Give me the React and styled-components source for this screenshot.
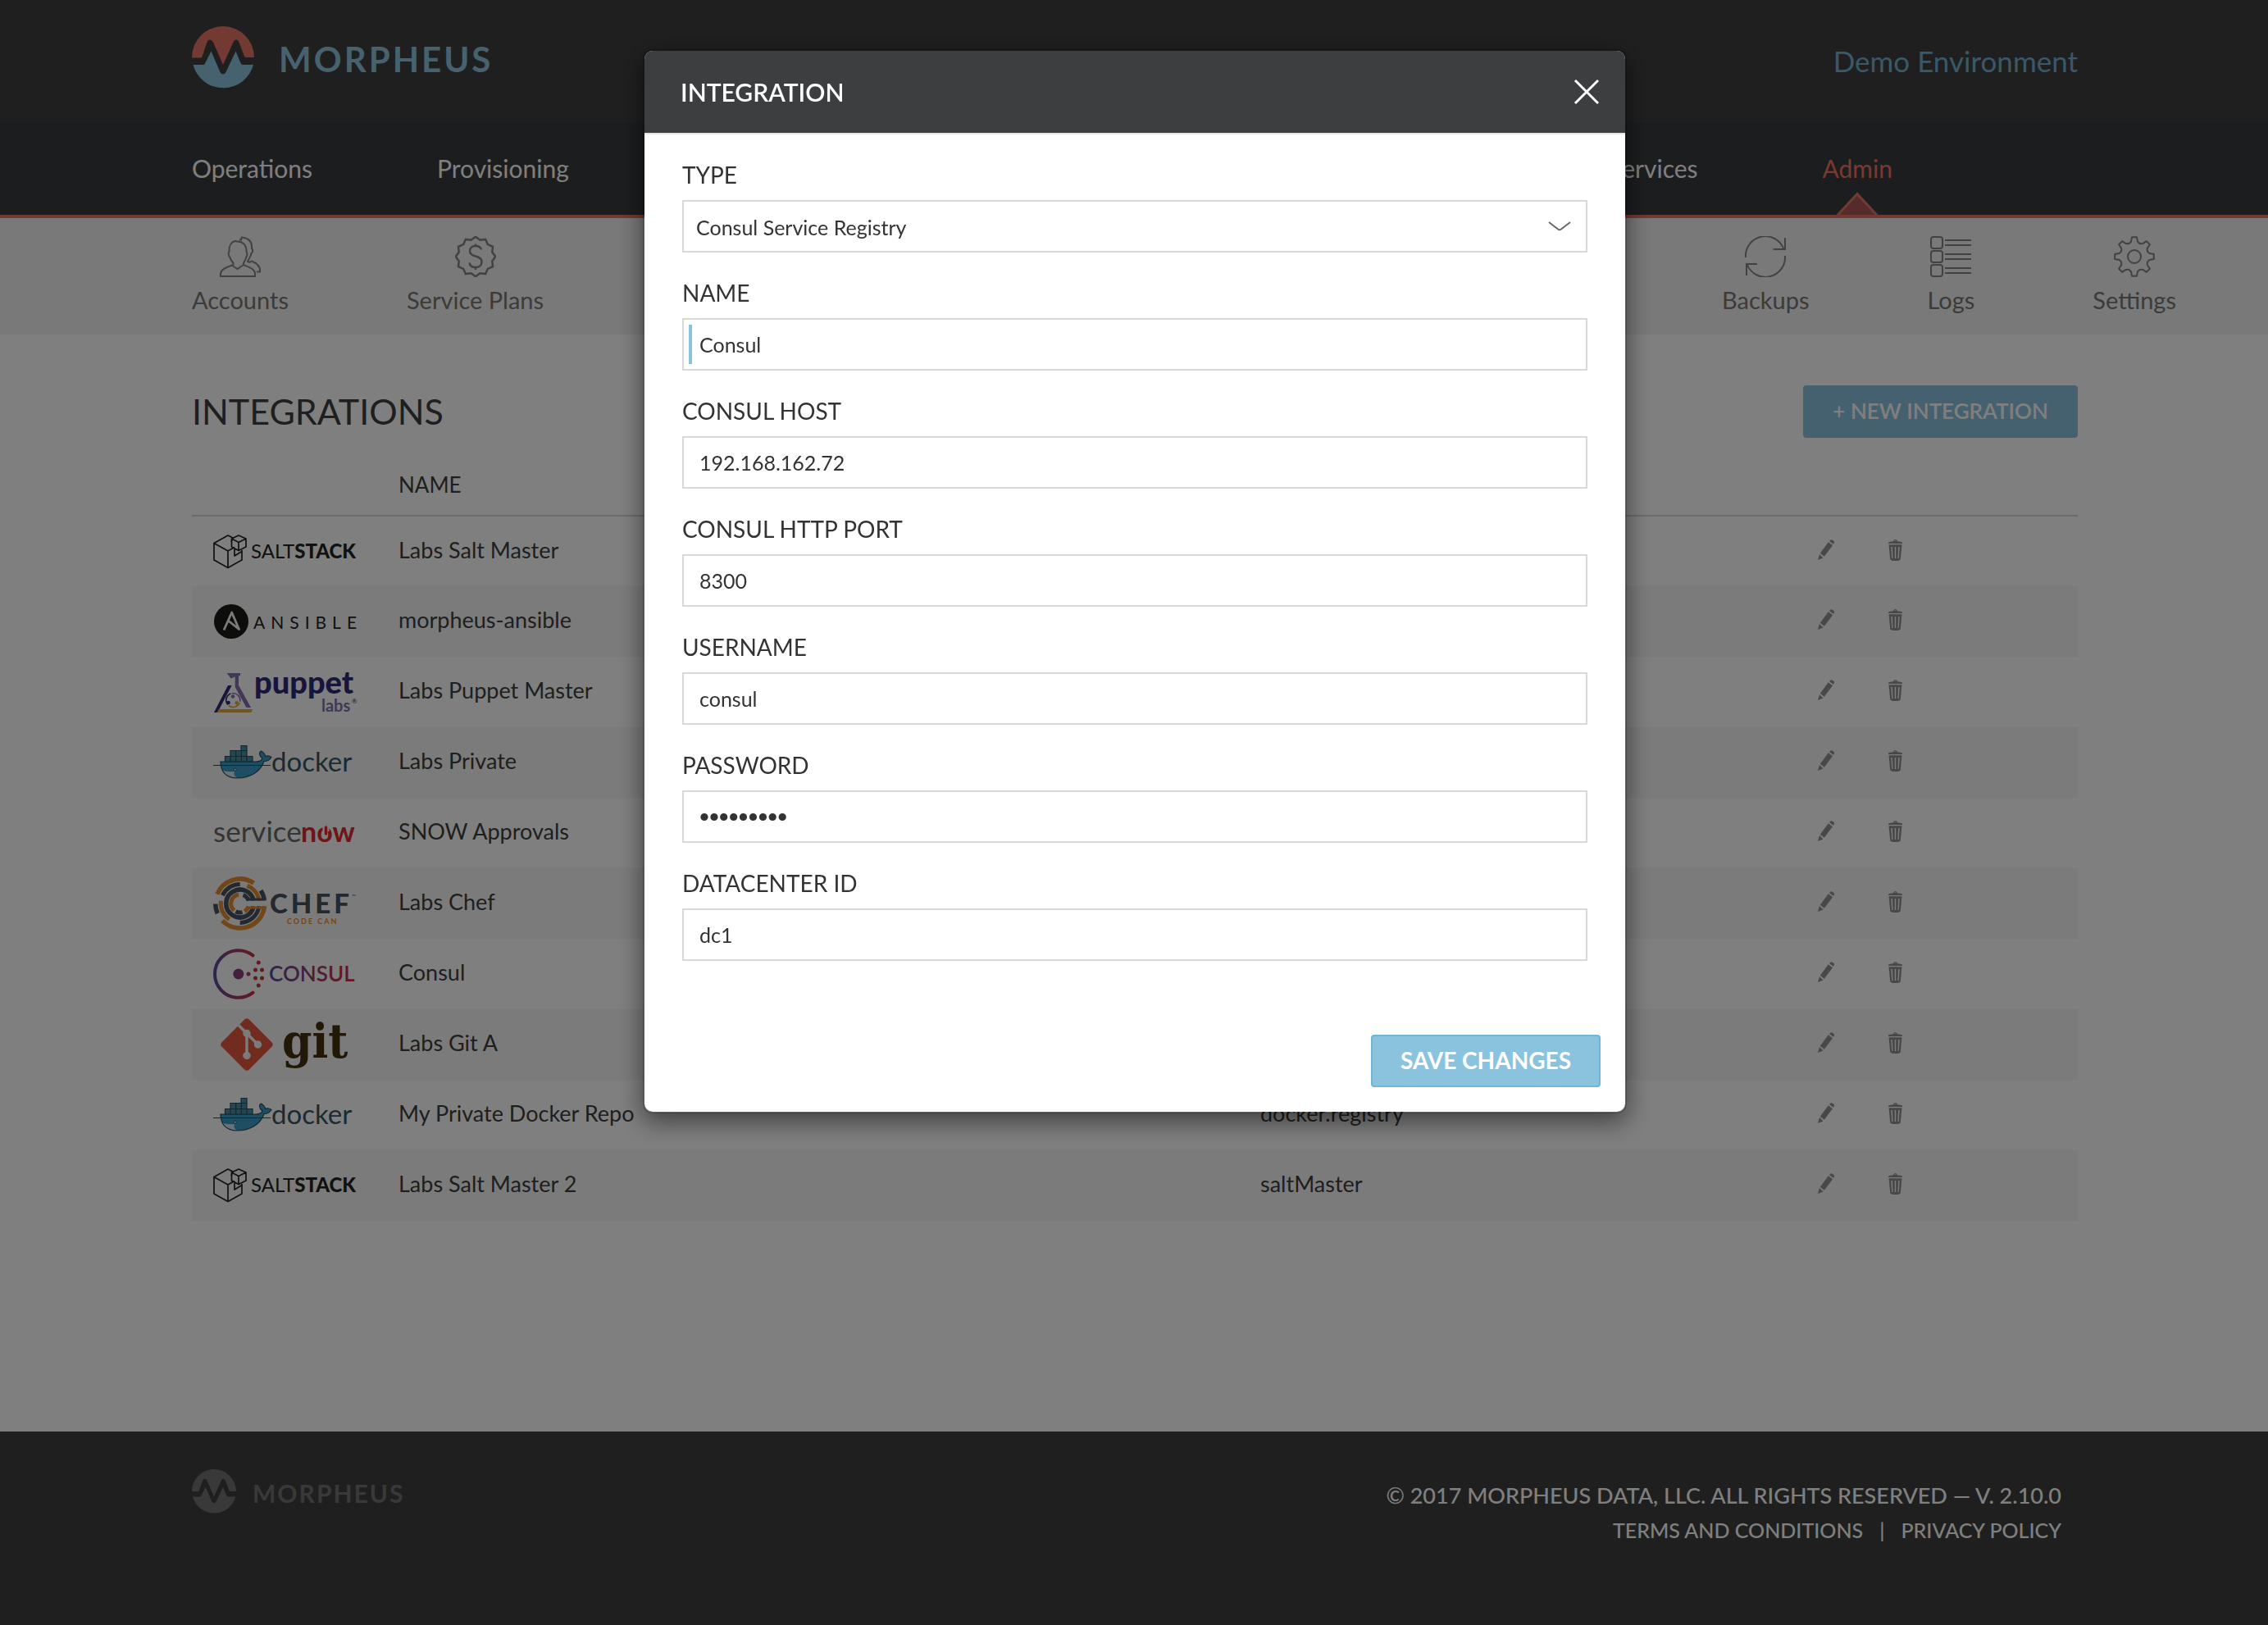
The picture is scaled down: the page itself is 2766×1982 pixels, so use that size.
import React from "react";
import styled, { createGlobalStyle } from "styled-components";

const font = 'Lato, "Open Sans", sans-serif';

const GlobalStyle = createGlobalStyle`
  *, *::before, *::after { box-sizing: border-box; }
  body { margin: 0; background: #fff; color: #3e3e3e; font-family: ${font}; }
  button, input, select { font-family: inherit; }
  a { color: inherit; text-decoration: none; }
`;

/* ---------- page shell ---------- */

const Page = styled.div`
  min-height: 100vh;
  display: flex;
  flex-direction: column;
`;

const TopBar = styled.header`
  display: flex;
  align-items: center;
  justify-content: space-between;
  height: 150px;
  padding: 0 232px 10px 234px;
  background: #3f3f3f;
`;

const Brand = styled.a`
  display: flex;
  align-items: center;
  gap: ${(p) => (p.$small ? "20px" : "30px")};
  color: ${(p) => (p.$small ? "#727272" : "#8cc4de")};
  font-size: ${(p) => (p.$small ? "30px" : "42px")};
  line-height: ${(p) => (p.$small ? "50px" : "72px")};
  font-weight: 700;
  letter-spacing: ${(p) => (p.$small ? "2px" : "3px")};
`;

const Wordmark = styled.span`
  padding-top: 4px;
`;

const EnvironmentName = styled.span`
  color: #74b0d0;
  font-size: 35px;
  line-height: 44px;
  padding-top: 8px;
`;

const MainNav = styled.nav`
  display: flex;
  justify-content: space-between;
  height: 116px;
  padding: 0 458px 0 234px;
  background: #383b3e;
  border-bottom: 4px solid #e47464;
`;

const NavGroup = styled.div`
  display: flex;
  gap: ${(p) => p.$gap};
`;

const NavLink = styled.a`
  position: relative;
  color: ${(p) => (p.$active ? "#f07460" : "#fff")};
  font-size: 30px;
  line-height: 110px;
`;

const ActiveMarker = styled.svg`
  position: absolute;
  left: 50%;
  bottom: 0;
  margin-left: -26px;
  width: 52px;
  height: 28px;
`;

const SubNav = styled.nav`
  display: flex;
  justify-content: space-between;
  height: 142px;
  padding: 22px 112px 0 234px;
  background: #f2f2f2;
`;

const SubNavLink = styled.a`
  display: flex;
  flex-direction: column;
  align-items: center;
  gap: 11px;
  color: #777775;
  font-size: 29px;
  line-height: 34px;

  svg {
    width: 50px;
    height: 50px;
    fill: none;
    stroke: #858583;
    stroke-width: 2;
  }
`;

const Main = styled.main`
  flex: 1;
  padding: 62px 232px 60px 234px;
`;

const TitleRow = styled.div`
  display: flex;
  justify-content: space-between;
  align-items: center;
  height: 64px;
`;

const Title = styled.h1`
  margin: 0;
  font-size: 43px;
  line-height: 50px;
  font-weight: 400;
`;

const Button = styled.button`
  height: 64px;
  padding: 0 34px 2px;
  border: 2px solid ${(p) => (p.$outlined ? "#73b5d7" : "#8cc4de")};
  border-radius: 4px;
  background: #8bc3df;
  color: #fff;
  font-size: ${(p) => (p.$outlined ? "28px" : "26px")};
  line-height: 34px;
  font-weight: ${(p) => (p.$outlined ? 700 : 600)};
`;

/* ---------- table ---------- */

const Table = styled.table`
  width: 100%;
  margin-top: 20px;
  border-collapse: collapse;
  table-layout: fixed;
  font-size: 27px;
  line-height: 34px;
  text-align: left;

  th {
    height: 75px;
    padding: 0;
    font-size: 26px;
    font-weight: 400;
  }
  thead tr { border-bottom: 2px solid #d8d8d8; }
  tbody td { height: 86px; padding: 0 0 4px; }
  tbody tr:nth-child(even) { background: #f6f6f6; }
`;

const Column = styled.col`
  width: ${(p) => p.$width};
`;

const LogoCell = styled.td`
  tbody tr > && { padding: 0 0 0 26px; }
  svg { display: block; width: 176px; height: 70px; overflow: visible; }
`;

const Actions = styled.div`
  display: flex;
  gap: 66px;
`;

const IconButton = styled.button`
  display: block;
  padding: 0;
  border: 0;
  background: none;
  svg { display: block; height: 26px; width: ${(p) => p.$width}; fill: #909090; }
`;

/* ---------- footer ---------- */

const Footer = styled.footer`
  display: flex;
  justify-content: space-between;
  align-items: flex-start;
  min-height: 236px;
  padding: 46px 252px 40px 234px;
  background: #3f3f3f;
`;

const Legal = styled.div`
  padding-top: 11px;
  color: #fff;
  text-align: right;
  font-size: 27px;
  line-height: 42px;
  font-weight: 500;
`;

const LegalLinks = styled.div`
  display: flex;
  justify-content: flex-end;
  gap: 20px;
  font-size: 25px;
`;

/* ---------- modal ---------- */

const Backdrop = styled.div`
  position: fixed;
  inset: 0;
  padding: 60px 0 0 2px;
  background: rgba(0, 0, 0, 0.5);
`;

const Modal = styled.section`
  width: 1200px;
  max-width: 100%;
  margin: 0 auto;
  border: 2px solid rgba(0, 0, 0, 0.2);
  border-radius: 12px;
  background: #fff;
  background-clip: padding-box;
  box-shadow: 0 10px 30px rgba(0, 0, 0, 0.5);
  color: #333;
`;

const ModalHeader = styled.header`
  display: flex;
  align-items: center;
  justify-content: space-between;
  height: 102px;
  padding: 0 30px 0 44px;
  border-bottom: 2px solid #e5e5e5;
  border-radius: 10px 10px 0 0;
  background: #3d3e40;
  background-clip: padding-box;
  color: #fff;
`;

const ModalTitle = styled.h2`
  margin: 0;
  font-size: 30px;
  line-height: 36px;
  font-weight: 600;
`;

const CloseButton = styled.button`
  padding: 0;
  border: 0;
  background: none;
  svg { display: block; width: 34px; height: 34px; stroke: #fff; stroke-width: 3; }
`;

const Form = styled.form`
  padding: 32px 46px 0;
`;

const Field = styled.div`
  position: relative;
  display: flex;
  flex-direction: column;
  gap: 14px;
  padding-bottom: 32px;
`;

const Label = styled.label`
  font-size: 28px;
  line-height: 34px;
`;

const Input = styled.input`
  width: 100%;
  height: 64px;
  padding: 0 19px;
  border: 2px solid #d8d8d8;
  border-radius: 0;
  outline: 0;
  background: #fff;
  color: #333;
  font-size: 25px;

  &[type="password"] {
    font-family: "Liberation Sans", Arial, sans-serif;
    font-size: 34px;
  }
  ${(p) =>
    p.$current &&
    `background-image: linear-gradient(#8bc3dc, #8bc3dc);
     background-size: 4px 48px;
     background-position: 6px center;
     background-repeat: no-repeat;`}
`;

const Select = styled.select`
  width: 100%;
  height: 64px;
  padding: 2px 15px 0;
  border: 2px solid #d8d8d8;
  border-radius: 0;
  appearance: none;
  background: #fff;
  color: #333;
  font-size: 25px;
`;

const Chevron = styled.svg`
  position: absolute;
  right: 20px;
  top: 73px;
  width: 28px;
  height: 14px;
  fill: none;
  stroke: #666;
  stroke-width: 2;
  pointer-events: none;
`;

const ModalFooter = styled.footer`
  display: flex;
  justify-content: flex-end;
  padding: 58px 30px 30px;
`;

/* ---------- drawings ---------- */

const point = (cx, cy, r, deg) => {
  const a = (deg * Math.PI) / 180;
  return `${(cx + r * Math.cos(a)).toFixed(2)} ${(cy + r * Math.sin(a)).toFixed(2)}`;
};

const arc = (cx, cy, r, from, to) =>
  `M${point(cx, cy, r, from)}A${r} ${r} 0 ${to - from > 180 ? 1 : 0} 1 ${point(cx, cy, r, to)}`;

function MorpheusMark({ size, top, bottom }) {
  return (
    <svg width={size} height={size} viewBox="0 0 76 76" aria-hidden="true">
      <path
        fill={top}
        d="M0 38A38 38 0 0 1 76 38H66Q64.500 38 64 36.500L57.500 19.500Q56.500 16.500 54 16.500Q51.500 16.500 50.500 19.500L38 47L26 19.500Q24.500 16.500 22 16.500Q19.500 16.500 18.500 19.500L12.500 37Q12 38.500 10.500 38.500H0Z"
      />
      <path
        fill={bottom}
        d="M1.500 47H14Q15.500 47 16 45.500L23.500 30.500L34.500 56Q35.800 58.500 38 58.500Q40.200 58.500 41.500 56L53.500 30.500L59.500 45Q60.200 47 62 47H75A38 38 0 0 1 1.500 47Z"
      />
    </svg>
  );
}

function AccountsIcon() {
  return (
    <svg viewBox="0 0 50 50" aria-hidden="true">
      <path d="M19 6C14 7 11 12 11.500 19C10 20 10.500 24 12.500 26C13 29 15.500 31 16.500 33L16.500 35C9 38 1 40 1 46V49H43V46C43 40 36 38 29 35V33C30.500 30 32 28 32 26C34 24 33.500 20 32.500 19C33 11 28 6 21 6.500Z" />
      <path d="M14.500 35.500L21.500 40L29 35" />
      <path d="M24 4L26 4.500L27 1.500C34 2 40 6 39 15C41 17 40 20 38.500 21C38 25 35 28 34 31L36 32L39 30.500C45 33 50 37 49 43.500H45" />
    </svg>
  );
}

function PlansIcon() {
  const pts = Array.from({ length: 24 }, (_, i) =>
    point(25, 25, i % 2 ? 21 : 24.3, i * 15 - 90)
  ).join("L");
  return (
    <svg viewBox="0 0 50 50" aria-hidden="true">
      <path strokeWidth="2.500" d={`M${pts}Z`} />
      <path
        strokeWidth="2.500"
        d="M25 9.500V13M25 37.500V41M32 16.500C31 13 28.500 12 25 12C20.500 12 18 14.500 18 18C18 22 21 23.500 25 24.500C29.500 25.500 32.500 27.500 32.500 31.500C32.500 35.500 29.500 38 25 38C21 38 18 36 17.500 32.500"
      />
    </svg>
  );
}

function BackupsIcon() {
  return (
    <svg viewBox="0 0 50 50" aria-hidden="true">
      <path d="M1 26A24 24 0 0 1 47.500 16M49 2V16H34.500M49 24A24 24 0 0 1 2.500 34M2 48V34H15" />
    </svg>
  );
}

function LogsIcon() {
  return (
    <svg viewBox="0 0 50 50" aria-hidden="true">
      {[1, 18, 35].map((y) => (
        <g key={y}>
          <rect x="1" y={y} width="14" height="14" rx="3" />
          <path d={`M18 ${y + 4}H50M18 ${y + 10}H50`} />
        </g>
      ))}
    </svg>
  );
}

function SettingsIcon() {
  const gear = Array.from({ length: 8 }, (_, i) => {
    const a = i * 45 - 90;
    return `${point(25, 25, 24, a - 7)}L${point(25, 25, 24, a + 7)}L${point(25, 25, 19, a + 12)}Q${point(25, 25, 16, a + 22.5)} ${point(25, 25, 19, a + 33)}`;
  }).join("L");
  return (
    <svg viewBox="0 0 50 50" aria-hidden="true">
      <path strokeLinejoin="round" d={`M${gear}Z`} />
      <circle cx="25" cy="25" r="8" />
    </svg>
  );
}

function PencilIcon() {
  return (
    <svg viewBox="0 0 20 26" aria-hidden="true">
      <path d="M0 25L2 18L6.500 22.500ZM2.800 16.800L12.800 3.300L18 7.300L7.800 20.800ZM14 2L15.200 .700Q16.500 -.300 18 .700L19.500 2Q20.700 3.200 19.600 4.800L19 5.800Z" />
    </svg>
  );
}

function TrashIcon() {
  return (
    <svg viewBox="0 0 17 26" aria-hidden="true">
      <path
        fillRule="evenodd"
        d="M0 5V4Q0 3 2 2.800L6 2.200Q6.500 0 8.500 0Q10.500 0 11 2.200L15 2.800Q17 3 17 4V5ZM7.300 2H9.700Q9.300 1.300 8.500 1.300Q7.700 1.300 7.300 2ZM.500 6.200H16.500L14.800 24Q14.600 26 8.500 26Q2.400 26 2.200 24ZM3.300 9L4.300 23H5.500L4.800 9ZM7.800 9V23H9.200V9ZM12.200 9L11.500 23H12.700L13.700 9Z"
      />
    </svg>
  );
}

function SaltStackLogo() {
  return (
    <svg viewBox="0 0 176 70" role="img" aria-label="SaltStack">
      <g fill="none" stroke="#222" strokeWidth="1.700" strokeLinejoin="round">
        <path d="M24 18L18 15L1 24.500V45L18 54.500L35 45V33M1 24.500L18 34L26 29.500M18 34V54.500M24 18L22 23" />
        <path d="M31 15L40 19V29L31 33.500L22.500 29V19ZM22.500 19L31 23.500L40 19M31 23.500V33.500M26 30V40L35 34.500" />
      </g>
      <text x="46" y="43" fontSize="24" fill="#222">
        SALT<tspan fontWeight="900">STACK</tspan>
      </text>
    </svg>
  );
}

function AnsibleLogo() {
  return (
    <svg viewBox="0 0 176 70" role="img" aria-label="Ansible">
      <circle cx="22" cy="35" r="21" fill="#1a1a18" />
      <path
        d="M13 45.500L22.700 24L31.500 44.500L19 34.500"
        fill="none"
        stroke="#f6f6f6"
        strokeWidth="2.800"
        strokeLinejoin="round"
      />
      <text x="49" y="44" fontSize="21" letterSpacing="7" fill="#222">
        ANSIBLE
      </text>
    </svg>
  );
}

function PuppetLogo() {
  return (
    <svg viewBox="0 0 176 70" role="img" aria-label="Puppet Labs">
      <path fill="#8070ac" d="M16.700 12H33V15.300H31V26.700L46 54H40.500L26.700 29V16.500L21.500 18.500Z" />
      <path fill="#302a74" d="M18 27H22.700L5.300 60H1Z" />
      <path fill="#e9a93f" d="M6.700 56H48L46.700 60H4.700Z" />
      <g fill="none" strokeWidth="1.700">
        <path stroke="#8070ac" d={arc(24.3, 45, 8.5, -100, 10)} />
        <path stroke="#e9a93f" d={arc(24.3, 45, 8.5, 20, 130)} />
        <path stroke="#302a74" d={arc(24.3, 45, 8.5, 140, 250)} />
      </g>
      <circle cx="24" cy="40.500" r="2.200" fill="#8070ac" />
      <circle cx="18.700" cy="48" r="2.200" fill="#302a74" />
      <circle cx="28.700" cy="48.300" r="2.200" fill="#e9a93f" />
      <text x="50" y="37" fontSize="38" fontWeight="900" fill="#302a74">
        puppet
      </text>
      <text x="132" y="59" fontSize="20" fontWeight="700" fill="#8070ac">
        labs
      </text>
      <text x="169" y="49" fontSize="8" fill="#302a74">
        ®
      </text>
    </svg>
  );
}

function DockerLogo() {
  return (
    <svg viewBox="0 0 176 70" role="img" aria-label="Docker">
      <g stroke="#2b4d5c" strokeWidth="1.200">
        <path
          fill="#3a9cc8"
          d="M9 34H52C56 34 59 33 60 30C55.500 27 56 22 58.500 21C61.500 23 63.500 26 63.500 27.500C66 26.500 69 27 71 28.500C69 32 65 33.500 62 33.500C58 46 45 54 29 54C15 54 9 45 9 34Z"
        />
        <path
          fill="#4590a6"
          d="M14.500 27.500H48V34H14.500ZM21 20.500H41V27.500H21ZM34 14.500H41V20.500H34ZM21 27.500V34M27.700 20.500V34M34.300 20.500V34M41 27.500V34"
        />
        <path d="M0 38.500H70" />
      </g>
      <path fill="#d6e6ea" d="M12 45Q20 47 26 46Q24 51 29 53.500Q17 53 12 45Z" />
      <circle cx="26.700" cy="43.700" r="1.500" fill="#fff" stroke="#2b4d5c" />
      <text x="71" y="46" fontSize="33" fill="#3b545f">
        docker
      </text>
    </svg>
  );
}

function ServiceNowLogo() {
  return (
    <svg viewBox="0 0 176 70" role="img" aria-label="ServiceNow">
      <text x="0" y="46" fontSize="35" fill="#686868">
        service
      </text>
      <text x="107" y="46" fontSize="34" fontWeight="700" fill="#dc2c2c">
        now
      </text>
      <path stroke="#fff" strokeWidth="8" d="M137.500 25V33" />
      <path stroke="#dc2c2c" strokeWidth="3.500" strokeLinecap="round" d="M137.500 28V36" />
    </svg>
  );
}

function ChefLogo() {
  const slate = "#47525f";
  const orange = "#e38d33";
  const ring = (r, from, to, color, width = 5.5) => (
    <path d={arc(32.7, 35, r, from, to)} stroke={color} strokeWidth={width} />
  );
  return (
    <svg viewBox="0 0 176 70" role="img" aria-label="Chef Code Can">
      <g fill="none">
        {ring(30, 202, 304, orange)}
        {ring(30, 328, 352, slate)}
        {ring(30, 156, 179, slate)}
        {ring(30, 6, 136, orange)}
        {ring(23.5, 205, 270, slate, 5)}
        {ring(23.5, 292, 352, orange, 5)}
        {ring(23.5, 124, 188, orange, 5)}
        {ring(23.5, 8, 90, slate, 5)}
        {ring(17, 12, 348, slate)}
        {ring(11, 130, 262, orange, 5)}
        {ring(11, 290, 342, slate, 5)}
        {ring(11, 18, 60, orange, 5)}
        {ring(11, 75, 118, slate, 5)}
        <path stroke={slate} strokeWidth="3" d="M42 30H64" />
        <path stroke={orange} strokeWidth="3" d="M44 40H64" />
      </g>
      <text x="69" y="47" fontSize="33" fontWeight="900" letterSpacing="4" fill={slate}>
        CHEF
      </text>
      <text x="169" y="28" fontSize="6" fill={slate}>
        ™
      </text>
      <text x="90" y="60" fontSize="9" fontWeight="700" letterSpacing="2" fill={orange}>
        CODE CAN
      </text>
    </svg>
  );
}

function ConsulLogo() {
  return (
    <svg viewBox="0 0 176 70" role="img" aria-label="Consul">
      <defs>
        <linearGradient id="consulFade">
          <stop offset="0" stopColor="#5b4c9c" />
          <stop offset="1" stopColor="#c8323f" />
        </linearGradient>
      </defs>
      <path
        d={arc(30.8, 35, 28.8, 52, 308)}
        fill="none"
        stroke="url(#consulFade)"
        strokeWidth="4"
        strokeLinecap="round"
      />
      <circle cx="30.800" cy="35" r="6.500" fill="#87407c" />
      <circle cx="43" cy="35" r="2.500" fill="#a83c60" />
      {[[51.5, 30], [51.5, 40], [59.5, 30], [59.5, 40], [55.3, 21], [55.3, 49]].map(([x, y]) => (
        <circle key={`${x}-${y}`} cx={x} cy={y} r="2.500" fill="#c8323f" />
      ))}
      <text x="68" y="44" fontSize="26" fontWeight="600" fill="url(#consulFade)">
        CONSUL
      </text>
    </svg>
  );
}

function GitLogo() {
  return (
    <svg viewBox="0 0 176 70" role="img" aria-label="Git">
      <rect x="17.500" y="11.500" width="47" height="47" rx="4" fill="#e2573f" transform="rotate(45 41 35)" />
      <g stroke="#f6f6f6" strokeWidth="3.500" fill="#f6f6f6">
        <path fill="none" d="M31 11.500L41 21.500V48M41 21.500L54.500 35" />
        <circle cx="41" cy="21.500" r="3" />
        <circle cx="41" cy="48.500" r="3" />
        <circle cx="54.500" cy="35" r="3" />
      </g>
      <text
        x="84"
        y="51"
        fontSize="58"
        fontWeight="700"
        fontFamily='"DejaVu Serif Condensed", "DejaVu Serif", serif'
        fill="#423010"
      >
        git
      </text>
    </svg>
  );
}

/* ---------- data ---------- */

const integrations = [
  { name: "Labs Salt Master", Logo: SaltStackLogo },
  { name: "morpheus-ansible", Logo: AnsibleLogo },
  { name: "Labs Puppet Master", Logo: PuppetLogo },
  { name: "Labs Private", Logo: DockerLogo },
  { name: "SNOW Approvals", Logo: ServiceNowLogo },
  { name: "Labs Chef", Logo: ChefLogo },
  { name: "Consul", Logo: ConsulLogo },
  { name: "Labs Git A", Logo: GitLogo },
  { name: "My Private Docker Repo", Logo: DockerLogo, type: "docker.registry" },
  { name: "Labs Salt Master 2", Logo: SaltStackLogo, type: "saltMaster" },
];

const fields = [
  { id: "name", label: "NAME", value: "Consul", current: true },
  { id: "host", label: "CONSUL HOST", value: "192.168.162.72" },
  { id: "port", label: "CONSUL HTTP PORT", value: "8300" },
  { id: "username", label: "USERNAME", value: "consul" },
  { id: "password", label: "PASSWORD", value: "password1", type: "password" },
  { id: "datacenter", label: "DATACENTER ID", value: "dc1" },
];

function SubNavItem({ icon: Icon, children }) {
  return (
    <SubNavLink href="#">
      <Icon />
      {children}
    </SubNavLink>
  );
}

function IntegrationModal() {
  return (
    <Backdrop>
      <Modal role="dialog" aria-modal="true" aria-labelledby="modal-title">
        <ModalHeader>
          <ModalTitle id="modal-title">INTEGRATION</ModalTitle>
          <CloseButton type="button" aria-label="Close">
            <svg viewBox="0 0 34 34">
              <path d="M3 3L31 31M31 3L3 31" />
            </svg>
          </CloseButton>
        </ModalHeader>
        <Form id="integration-form">
          <Field>
            <Label htmlFor="type">TYPE</Label>
            <Select id="type" defaultValue="consul">
              <option value="consul">Consul Service Registry</option>
            </Select>
            <Chevron viewBox="0 0 28 14" aria-hidden="true">
              <path d="M1 2L12 10.500Q14 12 16 10.500L27 2" />
            </Chevron>
          </Field>
          {fields.map((f) => (
            <Field key={f.id}>
              <Label htmlFor={f.id}>{f.label}</Label>
              <Input
                id={f.id}
                type={f.type || "text"}
                autoComplete="off"
                defaultValue={f.value}
                $current={f.current}
              />
            </Field>
          ))}
        </Form>
        <ModalFooter>
          <Button form="integration-form" type="submit" $outlined>
            SAVE CHANGES
          </Button>
        </ModalFooter>
      </Modal>
    </Backdrop>
  );
}

export default function App() {
  return (
    <>
      <GlobalStyle />
      <Page>
        <TopBar>
          <Brand href="#">
            <MorpheusMark size={76} top="#e47464" bottom="#8cc4de" />
            <Wordmark>MORPHEUS</Wordmark>
          </Brand>
          <EnvironmentName>Demo Environment</EnvironmentName>
        </TopBar>
        <MainNav aria-label="Main">
          <NavGroup $gap="152px">
            <NavLink href="#">Operations</NavLink>
            <NavLink href="#">Provisioning</NavLink>
          </NavGroup>
          <NavGroup $gap="152px">
            <NavLink href="#">Services</NavLink>
            <NavLink href="#" $active>
              Admin
              <ActiveMarker viewBox="0 0 52 28" aria-hidden="true">
                <path fill="#aa5856" stroke="#e47464" strokeWidth="3" d="M1 29.500L26 2.500L51 29.500" />
              </ActiveMarker>
            </NavLink>
          </NavGroup>
        </MainNav>
        <SubNav aria-label="Admin">
          <NavGroup $gap="144px">
            <SubNavItem icon={AccountsIcon}>Accounts</SubNavItem>
            <SubNavItem icon={PlansIcon}>Service Plans</SubNavItem>
          </NavGroup>
          <NavGroup $gap="144px">
            <SubNavItem icon={BackupsIcon}>Backups</SubNavItem>
            <SubNavItem icon={LogsIcon}>Logs</SubNavItem>
            <SubNavItem icon={SettingsIcon}>Settings</SubNavItem>
          </NavGroup>
        </SubNav>
        <Main>
          <TitleRow>
            <Title>INTEGRATIONS</Title>
            <Button type="button">+ NEW INTEGRATION</Button>
          </TitleRow>
          <Table>
            <colgroup>
              <Column $width="252px" />
              <Column $width="auto" />
              <Column $width="680px" />
              <Column $width="317px" />
            </colgroup>
            <thead>
              <tr>
                <td />
                <th scope="col">NAME</th>
                <td />
                <td />
              </tr>
            </thead>
            <tbody>
              {integrations.map(({ name, Logo, type }) => (
                <tr key={name}>
                  <LogoCell>
                    <Logo />
                  </LogoCell>
                  <td>{name}</td>
                  <td>{type}</td>
                  <td>
                    <Actions>
                      <IconButton type="button" aria-label={`Edit ${name}`} $width="20px">
                        <PencilIcon />
                      </IconButton>
                      <IconButton type="button" aria-label={`Delete ${name}`} $width="17px">
                        <TrashIcon />
                      </IconButton>
                    </Actions>
                  </td>
                </tr>
              ))}
            </tbody>
          </Table>
        </Main>
        <Footer>
          <Brand href="#" $small>
            <MorpheusMark size={54} top="#727272" bottom="#727272" />
            <Wordmark>MORPHEUS</Wordmark>
          </Brand>
          <Legal>
            <div>© 2017 MORPHEUS DATA, LLC. ALL RIGHTS RESERVED — V. 2.10.0</div>
            <LegalLinks>
              <a href="#">TERMS AND CONDITIONS</a>
              <span>|</span>
              <a href="#">PRIVACY POLICY</a>
            </LegalLinks>
          </Legal>
        </Footer>
      </Page>
      <IntegrationModal />
    </>
  );
}
